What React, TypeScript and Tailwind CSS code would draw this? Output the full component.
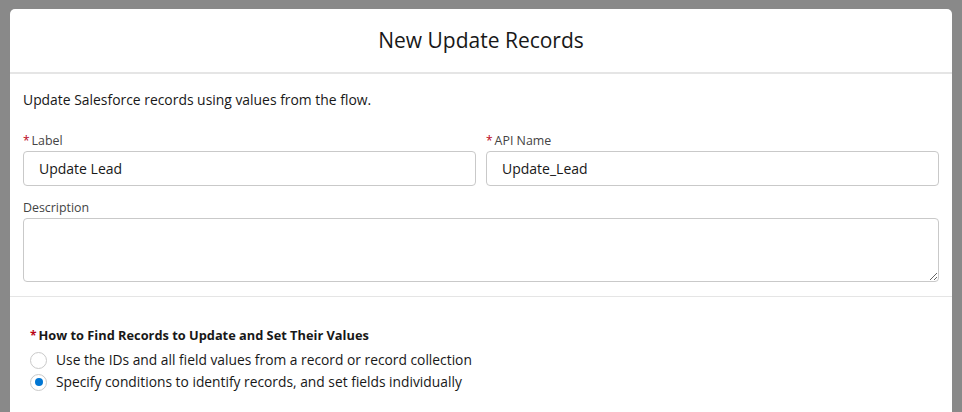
import React from "react";

function Required() {
  return <abbr className="no-underline text-[#ba0517] mr-[2px] text-[12px]" title="required">*</abbr>;
}

function Radio({ checked, label }: { checked?: boolean; label: string }) {
  return (
    <label className="flex items-center gap-[9px] h-[22px]">
      <span className="w-[17px] h-[17px] rounded-full border border-[#c9c9c9] bg-white flex items-center justify-center shrink-0">
        {checked && <span className="w-[8px] h-[8px] rounded-full bg-[#0176d3]" />}
      </span>
      <span className="text-[13.8px] text-[#181818]">{label}</span>
    </label>
  );
}

export default function App() {
  return (
    <div
      className="h-[412px] w-full overflow-hidden bg-[#898989] pt-[9px] px-[10px]"
      style={{ fontFamily: '"Open Sans", "Noto Sans", Arial, sans-serif' }}
    >
      <div className="bg-white rounded-t-[5px] h-full">
        {/* Header */}
        <div className="h-[65px] border-b-2 border-[#e5e5e5] flex items-center justify-center">
          <h1 className="text-[21px] text-[#181818] leading-none">New Update Records</h1>
        </div>

        {/* Details */}
        <div className="px-[13px] pt-[17px] pb-[14px] border-b border-[#e5e5e5]">
          <p className="text-[13.9px] text-[#181818] leading-[18px]">Update Salesforce records using values from the flow.</p>

          <div className="grid grid-cols-2 gap-[10px] mt-[23px]">
            <div>
              <div className="text-[12.4px] text-[#444] leading-[18px] mb-[1px]">
                <Required />Label
              </div>
              <input
                className="w-full h-[35px] border border-[#c9c9c9] rounded-[4px] px-[15px] text-[14px] text-[#181818] outline-none"
                defaultValue="Update Lead"
              />
            </div>
            <div>
              <div className="text-[12.4px] text-[#444] leading-[18px] mb-[1px]">
                <Required />API Name
              </div>
              <input
                className="w-full h-[35px] border border-[#c9c9c9] rounded-[4px] px-[15px] text-[14px] text-[#181818] outline-none"
                defaultValue="Update_Lead"
              />
            </div>
          </div>

          <div className="mt-[13px]">
            <div className="text-[12.4px] text-[#444] leading-[18px] mb-[1px]">Description</div>
            <textarea className="block w-full h-[64px] border border-[#c9c9c9] rounded-[4px] px-[12px] py-[6px] text-[14px] outline-none resize-y" />
          </div>
        </div>

        {/* How to find */}
        <div className="px-[20px] pt-[29px]">
          <div className="text-[12.8px] font-bold text-[#181818] leading-[18px]">
            <Required />How to Find Records to Update and Set Their Values
          </div>
          <div className="mt-[4px]">
            <Radio label="Use the IDs and all field values from a record or record collection" />
            <Radio checked label="Specify conditions to identify records, and set fields individually" />
          </div>
        </div>
      </div>
    </div>
  );
}
